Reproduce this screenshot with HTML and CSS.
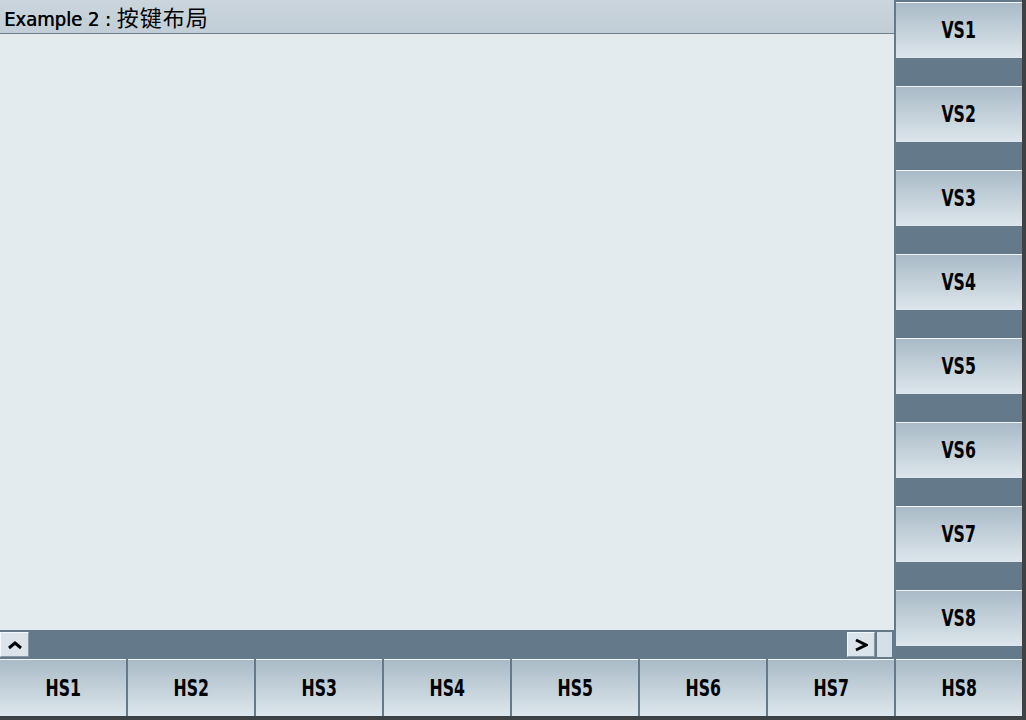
FILE: index.html
```html
<!DOCTYPE html>
<html>
<head>
<meta charset="utf-8">
<link rel="stylesheet" href="styles.css">
</head>
<body>
<div class="screen">
  <div class="top">
    <div class="left">
      <div class="title"><span class="latin">Example 2 : </span><span class="cjk">按键布局</span></div>
      <div class="content"></div>
      <div class="scrollrow">
        <div class="sbtn"><svg width="16" height="10" viewBox="0 0 16 10"><polyline points="2,8 8,3 14,8" fill="none" stroke="#000" stroke-width="3"/></svg></div>
        <div class="track"></div>
        <div class="sbtn right"><svg width="14" height="14" viewBox="0 0 14 14"><polyline points="2,2 12,7 2,12" fill="none" stroke="#000" stroke-width="3"/></svg></div>
        <div class="corner"></div>
      </div>
    </div>
    <div class="vcol">
      <div class="key"><span class="lbl">VS1</span></div>
      <div class="key"><span class="lbl">VS2</span></div>
      <div class="key"><span class="lbl">VS3</span></div>
      <div class="key"><span class="lbl">VS4</span></div>
      <div class="key"><span class="lbl">VS5</span></div>
      <div class="key"><span class="lbl">VS6</span></div>
      <div class="key"><span class="lbl">VS7</span></div>
      <div class="key"><span class="lbl">VS8</span></div>
    </div>
  </div>
  <div class="hrow">
    <div class="key"><span class="lbl">HS1</span></div>
    <div class="key"><span class="lbl">HS2</span></div>
    <div class="key"><span class="lbl">HS3</span></div>
    <div class="key"><span class="lbl">HS4</span></div>
    <div class="key"><span class="lbl">HS5</span></div>
    <div class="key"><span class="lbl">HS6</span></div>
    <div class="key"><span class="lbl">HS7</span></div>
    <div class="key"><span class="lbl">HS8</span></div>
  </div>
</div>
</body>
</html>
```
FILE: styles.css
```css
html, body {
  margin: 0;
  padding: 0;
  background: #3e4245;
}
.screen {
  width: 1026px;
  height: 720px;
  display: flex;
  flex-direction: column;
  background: #3e4245;
  overflow: hidden;
}
.top {
  height: 659px;
  display: flex;
  width: 1022px;
  background: #647a8a;
}
.left {
  width: 894px;
  display: flex;
  flex-direction: column;
}
.title {
  box-sizing: border-box;
  height: 34px;
  line-height: 33px;
  border-bottom: 1px solid #6a7e8c;
  background: linear-gradient(#cad5dd, #c2ced7);
  padding-left: 4px;
  color: #000;
  white-space: pre;
}
.latin {
  font-family: "DejaVu Sans Condensed", "DejaVu Sans", sans-serif;
  font-stretch: condensed;
  font-size: 20px;
  text-shadow: 0.4px 0 0 #000;
}
.cjk {
  font-family: "Noto Sans CJK SC", sans-serif;
  font-size: 22px;
  letter-spacing: 1px;
}
.content {
  flex: 1;
  background: #e3ebef;
}
.scrollrow {
  height: 29px;
  display: flex;
  align-items: flex-start;
  padding-top: 2px;
  box-sizing: border-box;
}
.sbtn {
  width: 29px;
  height: 25px;
  box-sizing: border-box;
  background: #dbe4ea;
  border-top: 1px solid #f4f8fa;
  border-left: 1px solid #f4f8fa;
  border-bottom: 1px solid #8797a3;
  border-right: 1px solid #8797a3;
  display: flex;
  align-items: center;
  justify-content: center;
}
.sbtn.right {
  width: 28px;
}
.track {
  flex: 1;
}
.corner {
  width: 15px;
  height: 25px;
  margin-left: 2px;
  margin-right: 2px;
  background: #d4dfe7;
}
.vcol {
  width: 128px;
  box-sizing: border-box;
  padding: 2px 0 0 2px;
  display: flex;
  flex-direction: column;
  gap: 28px;
}
.key {
  height: 56px;
  box-sizing: border-box;
  border-top: 1px solid #f2f6f8;
  background: linear-gradient(#a9bbc7, #dde6ec);
  display: flex;
  align-items: center;
  justify-content: center;
  font-family: "DejaVu Sans Condensed", "DejaVu Sans", sans-serif;
  font-stretch: condensed;
  font-weight: bold;
  font-size: 23px;
  color: #000;
  padding-bottom: 1px;
}
.lbl {
  display: inline-block;
  transform: scaleX(0.76);
}
.vcol .key {
  width: 126px;
}
.hrow {
  width: 1022px;
  height: 57px;
  display: flex;
  gap: 2px;
  background: #647a8a;
}
.hrow .key {
  width: 126px;
  height: 57px;
}
```
